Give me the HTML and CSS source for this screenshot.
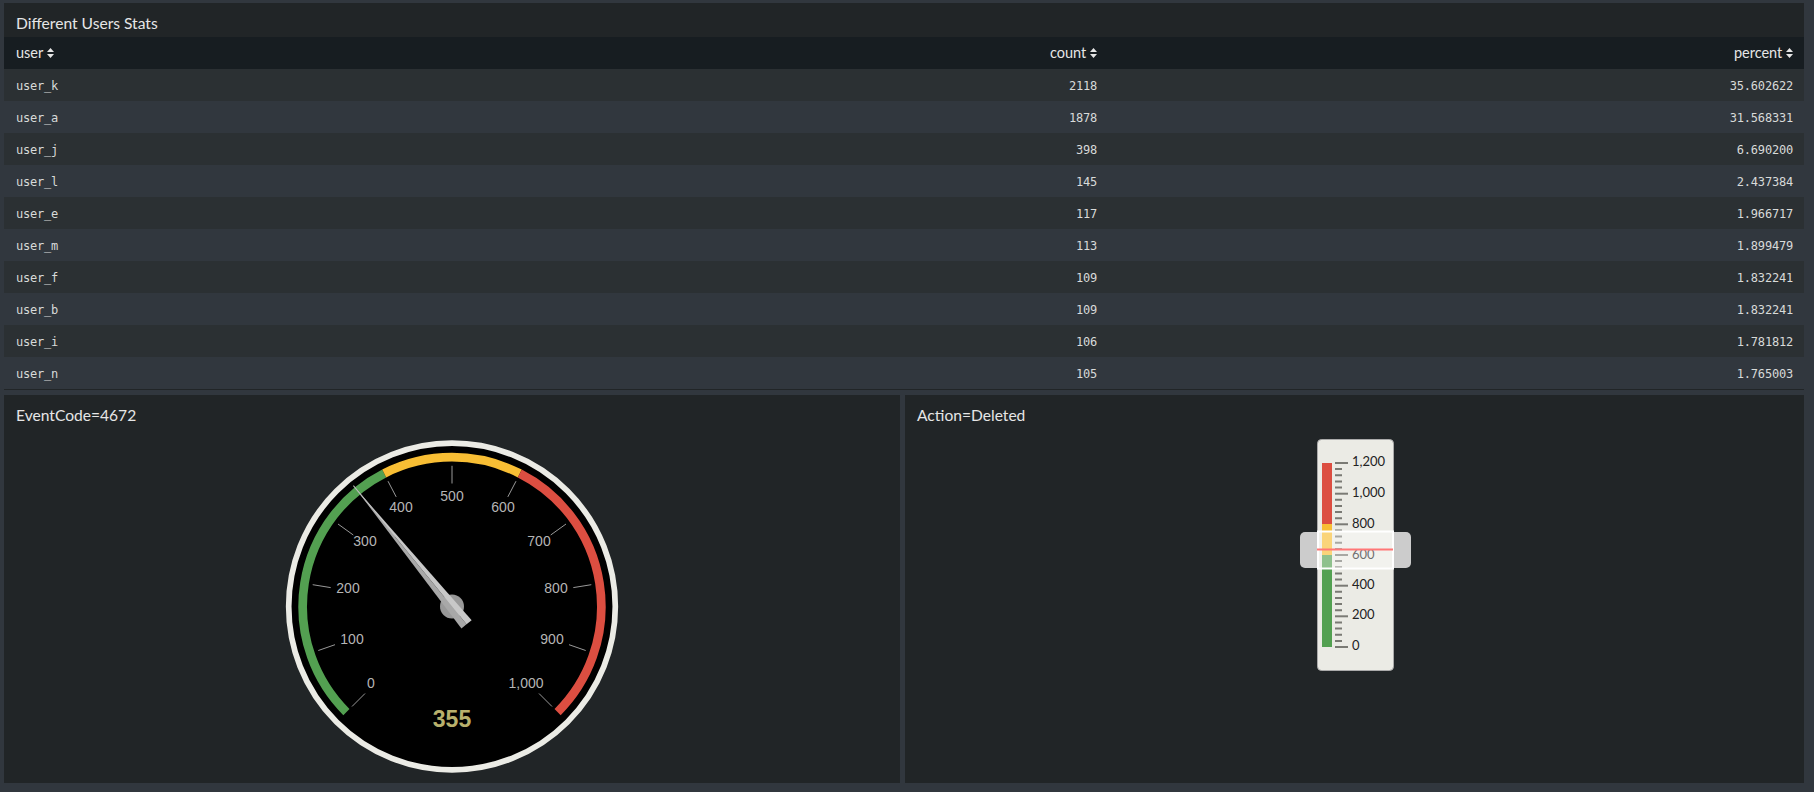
FILE: index.html
```html
<!DOCTYPE html>
<html lang="en">
<head>
    <meta charset="UTF-8">
    <title>Different Users Stats</title>
    <link rel="stylesheet" href="styles.css">
</head>
<body>
    <div class="dashboard">
        <section class="panel table-panel">
            <h2 class="panel-title">Different Users Stats</h2>
            <table class="stats">
                <thead>
                    <tr>
                        <th class="col-user">user <svg class="sort" viewBox="0 0 7 10"><path d="M3.5 0 7 4H0zM0 6h7l-3.500 4z"/></svg></th>
                        <th class="col-count">count <svg class="sort" viewBox="0 0 7 10"><path d="M3.5 0 7 4H0zM0 6h7l-3.500 4z"/></svg></th>
                        <th class="col-percent">percent <svg class="sort" viewBox="0 0 7 10"><path d="M3.5 0 7 4H0zM0 6h7l-3.500 4z"/></svg></th>
                    </tr>
                </thead>
                <tbody>
                    <tr><td>user_k</td><td class="num">2118</td><td class="num">35.602622</td></tr>
                    <tr><td>user_a</td><td class="num">1878</td><td class="num">31.568331</td></tr>
                    <tr><td>user_j</td><td class="num">398</td><td class="num">6.690200</td></tr>
                    <tr><td>user_l</td><td class="num">145</td><td class="num">2.437384</td></tr>
                    <tr><td>user_e</td><td class="num">117</td><td class="num">1.966717</td></tr>
                    <tr><td>user_m</td><td class="num">113</td><td class="num">1.899479</td></tr>
                    <tr><td>user_f</td><td class="num">109</td><td class="num">1.832241</td></tr>
                    <tr><td>user_b</td><td class="num">109</td><td class="num">1.832241</td></tr>
                    <tr><td>user_i</td><td class="num">106</td><td class="num">1.781812</td></tr>
                    <tr><td>user_n</td><td class="num">105</td><td class="num">1.765003</td></tr>
                </tbody>
            </table>
        </section>

        <div class="gauges">
            <section class="panel panel-left">
                <h2 class="panel-title">EventCode=4672</h2>
                <div class="chart chart-radial">
                    <svg width="336" height="336" viewBox="-168 -168.500 336 336">
                        <circle class="rim" r="163.300"/>
                        <path class="band band-green" d="M-105.600 105.600A149.300 149.300 0 0 1 -67.800 -133"/>
                        <path class="band band-yellow" d="M-67.800 -133A149.300 149.300 0 0 1 67.800 -133"/>
                        <path class="band band-red" d="M67.800 -133A149.300 149.300 0 0 1 105.600 105.600"/>
                        <g class="ticks">
                            <line x1="-100" y1="100" x2="-87" y2="87"/>
                            <line x1="-133.700" y1="44" x2="-117" y2="38.200"/>
                            <line x1="-139.300" y1="-21.800" x2="-121.300" y2="-18.900"/>
                            <line x1="-114" y1="-82.500" x2="-98.700" y2="-71.500"/>
                            <line x1="-64" y1="-125.300" x2="-55.800" y2="-109.600"/>
                            <line x1="0" y1="-140.700" x2="0" y2="-123"/>
                            <line x1="64" y1="-125.300" x2="55.800" y2="-109.600"/>
                            <line x1="114" y1="-82.500" x2="98.700" y2="-71.500"/>
                            <line x1="139.300" y1="-21.800" x2="121.300" y2="-18.900"/>
                            <line x1="133.700" y1="44" x2="117" y2="38.200"/>
                            <line x1="100" y1="100" x2="87" y2="87"/>
                        </g>
                        <g class="labels">
                            <text x="-81" y="81.500">0</text>
                            <text x="-100" y="37">100</text>
                            <text x="-104" y="-14">200</text>
                            <text x="-87" y="-60.500">300</text>
                            <text x="-51" y="-94.500">400</text>
                            <text x="0" y="-105.500">500</text>
                            <text x="51" y="-94.500">600</text>
                            <text x="87" y="-60.500">700</text>
                            <text x="104" y="-14">800</text>
                            <text x="100" y="37">900</text>
                            <text x="74" y="81.500">1,000</text>
                        </g>
                        <text class="value" x="0" y="120">355</text>
                        <circle class="hub" r="12"/>
                        <g transform="rotate(-39.200)">
                            <line class="needle-tip" x1="0" y1="-156" x2="0" y2="-90"/>
                            <path class="needle-left" d="M0 -156 L-6.600 23 L0 23Z"/>
                            <path class="needle-right" d="M0 -156 L6.600 23 L0 23Z"/>
                        </g>
                    </svg>
                </div>
            </section>
            <section class="panel panel-right">
                <h2 class="panel-title">Action=Deleted</h2>
                <div class="chart chart-filler">
                    <svg width="112" height="232" viewBox="0 0 112 232">
                        <rect class="marker-back" x="0" y="93" width="111" height="36" rx="5"/>
                        <rect class="casing" x="17.500" y="0.500" width="76" height="231" rx="4"/>
                        <rect class="fill-red" x="22" y="24" width="10" height="61"/>
                        <rect class="fill-yellow" x="22" y="85" width="10" height="31"/>
                        <rect class="fill-green" x="22" y="116" width="10" height="92"/>
                        <g class="scale-major">
                            <line x1="35" y1="24" x2="48" y2="24"/>
                            <line x1="35" y1="54.700" x2="48" y2="54.700"/>
                            <line x1="35" y1="85.300" x2="48" y2="85.300"/>
                            <line x1="35" y1="116" x2="48" y2="116"/>
                            <line x1="35" y1="146.700" x2="48" y2="146.700"/>
                            <line x1="35" y1="177.300" x2="48" y2="177.300"/>
                            <line x1="35" y1="208" x2="48" y2="208"/>
                        </g>
                        <g class="scale-minor">
                            <path d="M35 30.100h7M35 36.300h7M35 42.400h7M35 48.500h7"/>
                            <path d="M35 60.800h7M35 66.900h7M35 73.100h7M35 79.200h7"/>
                            <path d="M35 91.500h7M35 97.600h7M35 103.700h7M35 109.900h7"/>
                            <path d="M35 122.100h7M35 128.300h7M35 134.400h7M35 140.500h7"/>
                            <path d="M35 152.800h7M35 158.900h7M35 165.100h7M35 171.200h7"/>
                            <path d="M35 183.500h7M35 189.600h7M35 195.700h7M35 201.900h7"/>
                        </g>
                        <g class="scale-labels">
                            <text x="52" y="27">1,200</text>
                            <text x="52" y="58">1,000</text>
                            <text x="52" y="89">800</text>
                            <text x="52" y="120">600</text>
                            <text x="52" y="150">400</text>
                            <text x="52" y="180">200</text>
                            <text x="52" y="211">0</text>
                        </g>
                        <rect class="marker-glass" x="18" y="92.500" width="75" height="37"/>
                        <line class="marker-line" x1="17" y1="110.500" x2="93" y2="110.500"/>
                    </svg>
                </div>
            </section>
        </div>
    </div>
</body>
</html>
```

FILE: styles.css
```css
html, body {
    height: 100%;
}

body {
    margin: 0;
    background-color: #31373e;
    font-family: 'Lato', sans-serif;
    color: #ddd;
    overflow: hidden;
}

.dashboard {
    display: flex;
    flex-direction: column;
    gap: 5px;
    width: 1800px;
    margin-left: 4px;
    padding-top: 3px;
}

.panel {
    background-color: #212527;
}

.panel-title {
    margin: 0;
    padding: 11px 10px 0 12px;
    height: 34px;
    box-sizing: border-box;
    font-size: 15.600px;
    font-weight: 400;
    line-height: 18px;
    color: #e6e6e6;
}

/* tabla de usuarios */
.stats {
    width: 100%;
    border-collapse: collapse;
    table-layout: fixed;
}

.stats th {
    box-sizing: border-box;
    height: 32px;
    padding: 0 11px 1px 12px;
    background-color: #171d21;
    font-size: 14.500px;
    font-weight: 400;
    text-align: right;
    color: #e6e6e6;
}

.stats th.col-user {
    text-align: left;
    width: 480px;
}

.stats th.col-count {
    width: 624px;
}

.sort {
    width: 7px;
    height: 10px;
    fill: #e6e6e6;
}

.stats td {
    box-sizing: border-box;
    height: 32px;
    padding: 1px 11px 0 12px;
    font-family: 'DejaVu Sans Mono', monospace;
    font-size: 12px;
    letter-spacing: -0.200px;
    color: #d8dad9;
}

.stats td.num {
    text-align: right;
}

.stats tbody tr:nth-child(odd) {
    background-color: #2b3033;
}

.stats tbody tr:nth-child(even) {
    background-color: #31373e;
}

.table-panel {
    border-bottom: 1px solid #212527;
}

/* gauges */
.gauges {
    display: flex;
    gap: 5px;
}

.gauges .panel {
    height: 388px;
}

.panel-left {
    flex: 0 0 896px;
}

.panel-right {
    flex: 1;
}

.chart {
    display: flex;
    justify-content: center;
}

.chart-radial {
    padding-top: 9px;
}

.chart-filler {
    padding-top: 10px;
    padding-left: 3px;
}

.rim {
    fill: #000;
    stroke: #ebebe5;
    stroke-width: 5.700;
}

.band {
    fill: none;
    stroke-width: 8.700;
}

.band-green {
    stroke: #53a051;
}

.band-yellow {
    stroke: #f8be34;
}

.band-red {
    stroke: #dc4e41;
}

.ticks line {
    stroke: #999;
    stroke-width: 1;
}

.labels text {
    font-family: 'Liberation Sans', sans-serif;
    font-size: 14px;
    text-anchor: middle;
    fill: #b5b5b5;
}

.value {
    font-family: 'Liberation Sans', sans-serif;
    font-size: 23px;
    font-weight: 700;
    text-anchor: middle;
    fill: #b8b06c;
}

.hub {
    fill: #999;
}

.needle-tip {
    stroke: #bbb;
    stroke-width: 1;
}

.needle-left {
    fill: #a8a8a8;
}

.needle-right {
    fill: #c8c8c8;
}

.casing {
    fill: #ebebe5;
    stroke: #aaa;
}

.marker-back {
    fill: #ccc;
}

.fill-red {
    fill: #dc4e41;
}

.fill-yellow {
    fill: #f8be34;
}

.fill-green {
    fill: #53a051;
}

.scale-major line {
    stroke: #7a7a74;
    stroke-width: 2;
}

.scale-minor path {
    stroke: #7a7a74;
    stroke-width: 2;
    fill: none;
}

.scale-labels text {
    font-size: 13px;
    fill: #222;
}

.marker-glass {
    fill: rgba(255, 255, 255, 0.350);
    stroke: #fff;
    stroke-width: 2;
}

.marker-line {
    stroke: #f77;
    stroke-width: 2;
}
```
